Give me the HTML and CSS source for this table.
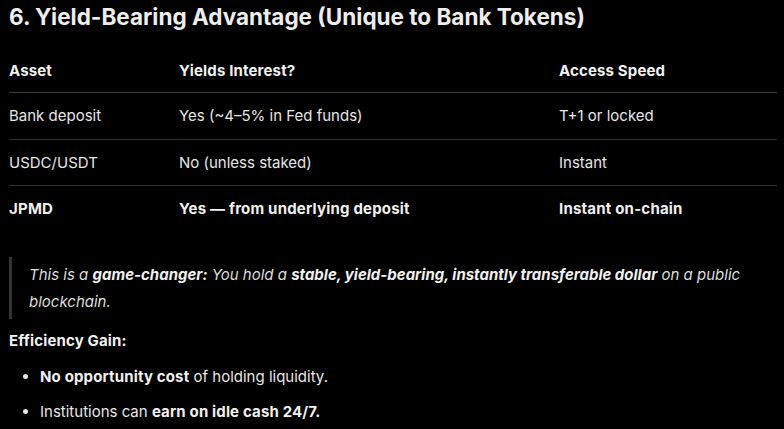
FILE: index.html
```html
<!DOCTYPE html>
<html>
<head>
<meta charset="utf-8">
<link rel="stylesheet" href="styles.css">
</head>
<body>
<div class="page">
  <h3 class="title">6. Yield-Bearing Advantage (Unique to Bank Tokens)</h3>
  <table class="grid">
    <thead>
      <tr><th class="c1">Asset</th><th class="c2">Yields Interest?</th><th class="c3">Access Speed</th></tr>
    </thead>
    <tbody>
      <tr><td>Bank deposit</td><td>Yes (~4–5% in Fed funds)</td><td>T+1 or locked</td></tr>
      <tr><td>USDC/USDT</td><td>No (unless staked)</td><td>Instant</td></tr>
      <tr class="strong"><td>JPMD</td><td>Yes — from underlying deposit</td><td>Instant on-chain</td></tr>
    </tbody>
  </table>
  <blockquote class="quote">
    <p>This is a <b>game-changer:</b> You hold a <b>stable, yield-bearing, instantly transferable dollar</b> on a public blockchain.</p>
  </blockquote>
  <p class="label"><b>Efficiency Gain:</b></p>
  <ul class="list">
    <li><b>No opportunity cost</b> of holding liquidity.</li>
    <li>Institutions can <b>earn on idle cash 24/7.</b></li>
  </ul>
</div>
</body>
</html>
```
FILE: styles.css
```css
html, body {
  margin: 0;
  padding: 0;
  background: #000;
}
body {
  font-family: Inter, "Noto Sans", sans-serif;
  color: #e6e6e6;
  font-size: 15px;
}
b {
  letter-spacing: 0.15px;
}
.page {
  padding: 0 7px 0 9px;
}
.title {
  margin: 0;
  padding-top: 3px;
  font-size: 22.5px;
  line-height: 28px;
  font-weight: 700;
  color: #ededed;
  letter-spacing: 0;
}
.grid {
  width: 768px;
  border-collapse: collapse;
  margin-top: 17px;
}
.grid th {
  text-align: left;
  font-weight: 700;
  color: #f0f0f0;
  height: 44px;
  padding: 0;
  border-bottom: 1px solid #3a3a3a;
  vertical-align: middle;
  letter-spacing: 0.15px;
}
.grid td {
  height: 45.5px;
  padding: 0;
  border-bottom: 1px solid #333;
  vertical-align: middle;
}
.grid tbody tr:last-child td {
  border-bottom: none;
}
.grid .c1 { width: 170px; }
.grid .c2 { width: 380px; }
.strong td {
  font-weight: 700;
  color: #f0f0f0;
  letter-spacing: 0.2px;
}
.quote {
  margin: 25px 0 0 0;
  border-left: 3px solid #333;
  padding: 4px 0 4px 17px;
}
.quote p {
  margin: 0;
  font-style: italic;
  line-height: 27px;
  color: #dedede;
}
.quote b {
  color: #f0f0f0;
  letter-spacing: 0;
}
.label {
  margin: 8px 0 0 0;
  line-height: 28px;
  color: #f0f0f0;
}
.list {
  margin: 8px 0 0 0;
  padding-left: 31px;
}
.list li {
  line-height: 27px;
  margin-bottom: 8px;
}
.list b { color: #f0f0f0; }
```
